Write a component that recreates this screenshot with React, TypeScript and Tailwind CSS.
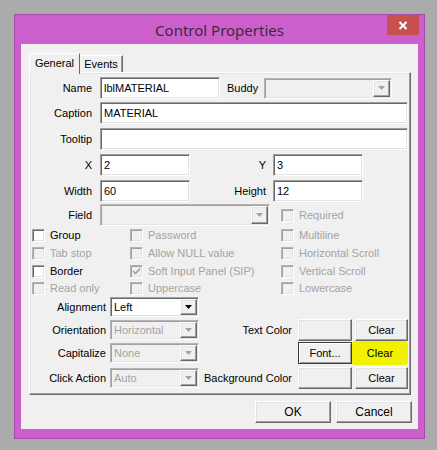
import React from 'react';

const sunken =
  'border border-t-[#a0a0a0] border-l-[#a0a0a0] border-r-white border-b-white shadow-[inset_1px_1px_0_#696969,inset_-1px_-1px_0_#e3e3e3]';
const sunkenOff =
  'border border-t-[#b4b4b4] border-l-[#b4b4b4] border-r-white border-b-white shadow-[inset_1px_1px_0_#a0a0a0,inset_-1px_-1px_0_#e3e3e3]';
const raised =
  'border border-t-white border-l-white border-r-[#696969] border-b-[#696969] shadow-[inset_-1px_-1px_0_#a0a0a0,inset_1px_1px_0_#e3e3e3]';

const TextBox = ({ value = '', className = '' }: { value?: string; className?: string }) => (
  <div className={`h-[22px] bg-white ${sunken} flex items-center pl-[3px] text-black ${className}`}>
    {value}
  </div>
);

const Combo = ({
  value = '',
  enabled = false,
  className = '',
}: {
  value?: string;
  enabled?: boolean;
  className?: string;
}) => (
  <div className={`flex h-[20px] ${enabled ? sunken : sunkenOff} ${enabled ? 'bg-white' : 'bg-[#f0f0f0]'} ${className}`}>
    <div className={`flex-1 flex items-center pl-[3px] ${enabled ? 'text-black' : 'text-[#a3a3a3]'}`}>
      {value}
    </div>
    <div className={`w-[17px] m-[1px] ${raised} bg-[#f0f0f0] flex items-center justify-center`}>
      <svg width="7" height="4" viewBox="0 0 7 4">
        <path d="M0 0h7L3.5 4z" fill={enabled ? '#000' : '#a3a3a3'} />
      </svg>
    </div>
  </div>
);

const Check = ({
  label,
  enabled = false,
  checked = false,
}: {
  label: string;
  enabled?: boolean;
  checked?: boolean;
}) => (
  <div className="flex items-center gap-[5px]">
    <div
      className={`w-[13px] h-[13px] flex items-center justify-center ${enabled ? `bg-white ${sunken}` : `bg-[#f0f0f0] ${sunkenOff}`}`}
    >
      {checked && (
        <svg width="9" height="9" viewBox="0 0 9 9">
          <path d="M1 4l2.5 2.5L8 1.5" stroke="#a3a3a3" strokeWidth="1.6" fill="none" />
        </svg>
      )}
    </div>
    <span className={enabled ? 'text-black' : 'text-[#a3a3a3]'}>{label}</span>
  </div>
);

const Btn = ({ label = '', className = '' }: { label?: string; className?: string }) => (
  <div className={`h-[22px] bg-[#f0f0f0] ${raised} flex items-center justify-center text-black ${className}`}>
    {label}
  </div>
);

export default function App() {
  return (
    <div className="w-[437px] h-[450px] bg-[#ababab] pt-[14px] pl-[14px] font-['Liberation_Sans',Arial,sans-serif] text-[11px] leading-none">
      {/* window frame */}
      <div className="w-[411px] h-[425px] bg-[#cd5fcd] border border-[#a84aa8] flex flex-col">
        <div className="relative h-[29px] flex items-center justify-center">
          <span className="font-['Noto_Sans',sans-serif] text-[15px] text-[#3a2a3a] mt-[2px]">Control Properties</span>
          <div className="absolute right-[5px] top-0 w-[32px] h-[20px] bg-[#c75050] flex items-center justify-center">
            <svg width="10" height="9" viewBox="0 0 10 9">
              <path d="M1.5 1l7 7M8.5 1l-7 7" stroke="#fff" strokeWidth="2" />
            </svg>
          </div>
        </div>

        {/* client */}
        <div className="mx-[6px] w-[397px] h-[385px] bg-[#f0f0f0] pt-[9px] pl-[8px]">
          {/* tabs */}
          <div className="flex items-end h-[19px]">
            <div className="relative z-10 h-[21px] -mb-[2px] w-[51px] bg-[#f0f0f0] border border-t-white border-l-white border-b-0 border-r-[#696969] flex items-start justify-center pt-[4px]">
              General
            </div>
            <div className="h-[17px] w-[43px] border border-t-white border-l-0 border-b-0 border-r-[#696969] shadow-[inset_-1px_0_0_#a0a0a0] flex items-center justify-center">
              Events
            </div>
          </div>

          {/* tab panel */}
          <div className={`w-[382px] h-[323px] ${raised} bg-[#f0f0f0] flex flex-col`}>
            {/* Name / Buddy */}
            <div className="flex items-center h-[22px] mt-[4px]">
              <div className="w-[62px] text-right">Name</div>
              <TextBox value="lblMATERIAL" className="ml-[8px] w-[120px]" />
              <div className="w-[29px] ml-[7px]">Buddy</div>
              <Combo className="ml-[8px] w-[128px] h-[21px]" />
            </div>
            {/* Caption */}
            <div className="flex items-center h-[22px] mt-[3px]">
              <div className="w-[62px] text-right">Caption</div>
              <TextBox value="MATERIAL" className="ml-[8px] w-[308px]" />
            </div>
            {/* Tooltip */}
            <div className="flex items-center h-[22px] mt-[4px]">
              <div className="w-[62px] text-right">Tooltip</div>
              <TextBox className="ml-[8px] w-[308px]" />
            </div>
            {/* X / Y */}
            <div className="flex items-center h-[22px] mt-[4px]">
              <div className="w-[62px] text-right">X</div>
              <TextBox value="2" className="ml-[8px] w-[90px]" />
              <div className="w-[76px] text-right">Y</div>
              <TextBox value="3" className="ml-[7px] w-[90px]" />
            </div>
            {/* Width / Height */}
            <div className="flex items-center h-[22px] mt-[4px]">
              <div className="w-[62px] text-right">Width</div>
              <TextBox value="60" className="ml-[8px] w-[90px]" />
              <div className="w-[76px] text-right">Height</div>
              <TextBox value="12" className="ml-[7px] w-[90px]" />
            </div>
            {/* Field */}
            <div className="flex items-center h-[22px] mt-[2px]">
              <div className="w-[62px] text-right">Field</div>
              <Combo className="ml-[8px] w-[170px] h-[22px]" />
              <div className="ml-[11px]">
                <Check label="Required" />
              </div>
            </div>

            {/* checkboxes */}
            <div className="grid grid-cols-[98px_151px_1fr] grid-rows-[18px_18px_18px_16px] pl-[2px] items-center">
              <Check label="Group" enabled />
              <Check label="Password" />
              <Check label="Multiline" />
              <Check label="Tab stop" />
              <Check label="Allow NULL value" />
              <Check label="Horizontal Scroll" />
              <Check label="Border" enabled />
              <Check label="Soft Input Panel (SIP)" checked />
              <Check label="Vertical Scroll" />
              <Check label="Read only" />
              <Check label="Uppercase" />
              <Check label="Lowercase" />
            </div>

            {/* lower section */}
            <div className="flex items-center h-[20px] mt-[1px]">
              <div className="w-[76px] text-right">Alignment</div>
              <Combo value="Left" enabled className="ml-[4px] w-[89px]" />
            </div>
            <div className="flex items-center h-[22px] mt-[2px]">
              <div className="w-[76px] text-right">Orientation</div>
              <Combo value="Horizontal" className="ml-[4px] w-[89px]" />
              <div className="ml-auto flex items-center">
                <span>Text Color</span>
                <Btn className="ml-[6px] w-[54px]" />
                <Btn label="Clear" className="ml-[3px] w-[53px]" />
              </div>
              <div className="w-[2px]" />
            </div>
            <div className="flex items-center h-[22px] mt-[1px]">
              <div className="w-[76px] text-right">Capitalize</div>
              <Combo value="None" className="ml-[4px] w-[89px]" />
              <div className="ml-auto flex items-center">
                <div className="w-[54px] h-[22px] bg-[#f0f0f0] border border-[#3c3c3c] shadow-[inset_1px_1px_0_#fff,inset_-1px_-1px_0_#a0a0a0] flex items-center justify-center">
                  Font...
                </div>
                <div className="ml-[0px] w-[56px] h-[24px] bg-[#f2f200] rounded-[3px] flex items-center justify-center text-black">
                  Clear
                </div>
              </div>
              <div className="w-[2px]" />
            </div>
            <div className="flex items-center h-[22px] mt-[3px]">
              <div className="w-[76px] text-right">Click Action</div>
              <Combo value="Auto" className="ml-[4px] w-[89px]" />
              <div className="ml-auto flex items-center">
                <span>Background Color</span>
                <Btn className="ml-[6px] w-[54px]" />
                <Btn label="Clear" className="ml-[3px] w-[53px]" />
              </div>
              <div className="w-[2px]" />
            </div>
          </div>

          {/* dialog buttons */}
          <div className="flex justify-end gap-[5px] pr-[6px] mt-[6px]">
            <Btn label="OK" className="w-[76px] text-[12px]" />
            <Btn label="Cancel" className="w-[76px] text-[12px]" />
          </div>
        </div>
      </div>
    </div>
  );
}
